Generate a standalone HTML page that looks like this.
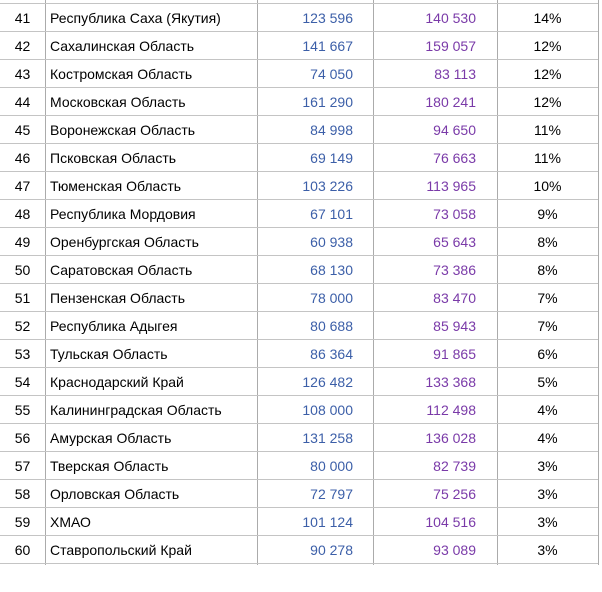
<!DOCTYPE html>
<html><head><meta charset="utf-8"><style>
body{margin:0;width:602px;height:565px;background:#fff;overflow:hidden;font-family:"Liberation Sans",sans-serif;font-size:14px;color:#000}
.r{position:absolute;left:0;width:598px;height:28px;border-top:1px solid #c4c4c4}
.r div{position:absolute;top:0;height:28px;line-height:28px;white-space:nowrap}
.a{left:0;width:45px;text-align:center}
.b{left:50px}
.c{right:245px;color:#3c5fa8}
.d{right:122px;color:#7a3aa8}
.e{left:497px;width:101px;text-align:center}
.v{position:absolute;top:0;width:1px;height:565px;background:#ababab}
</style></head><body>
<div class="v" style="left:45px"></div>
<div class="v" style="left:257px"></div>
<div class="v" style="left:373px"></div>
<div class="v" style="left:497px"></div>
<div class="v" style="left:598px"></div>
<div class="r" style="top:3px"><div class="a">41</div><div class="b">Республика Саха (Якутия)</div><div class="c">123 596</div><div class="d">140 530</div><div class="e">14%</div></div>
<div class="r" style="top:31px"><div class="a">42</div><div class="b">Сахалинская Область</div><div class="c">141 667</div><div class="d">159 057</div><div class="e">12%</div></div>
<div class="r" style="top:59px"><div class="a">43</div><div class="b">Костромская Область</div><div class="c">74 050</div><div class="d">83 113</div><div class="e">12%</div></div>
<div class="r" style="top:87px"><div class="a">44</div><div class="b">Московская Область</div><div class="c">161 290</div><div class="d">180 241</div><div class="e">12%</div></div>
<div class="r" style="top:115px"><div class="a">45</div><div class="b">Воронежская Область</div><div class="c">84 998</div><div class="d">94 650</div><div class="e">11%</div></div>
<div class="r" style="top:143px"><div class="a">46</div><div class="b">Псковская Область</div><div class="c">69 149</div><div class="d">76 663</div><div class="e">11%</div></div>
<div class="r" style="top:171px"><div class="a">47</div><div class="b">Тюменская Область</div><div class="c">103 226</div><div class="d">113 965</div><div class="e">10%</div></div>
<div class="r" style="top:199px"><div class="a">48</div><div class="b">Республика Мордовия</div><div class="c">67 101</div><div class="d">73 058</div><div class="e">9%</div></div>
<div class="r" style="top:227px"><div class="a">49</div><div class="b">Оренбургская Область</div><div class="c">60 938</div><div class="d">65 643</div><div class="e">8%</div></div>
<div class="r" style="top:255px"><div class="a">50</div><div class="b">Саратовская Область</div><div class="c">68 130</div><div class="d">73 386</div><div class="e">8%</div></div>
<div class="r" style="top:283px"><div class="a">51</div><div class="b">Пензенская Область</div><div class="c">78 000</div><div class="d">83 470</div><div class="e">7%</div></div>
<div class="r" style="top:311px"><div class="a">52</div><div class="b">Республика Адыгея</div><div class="c">80 688</div><div class="d">85 943</div><div class="e">7%</div></div>
<div class="r" style="top:339px"><div class="a">53</div><div class="b">Тульская Область</div><div class="c">86 364</div><div class="d">91 865</div><div class="e">6%</div></div>
<div class="r" style="top:367px"><div class="a">54</div><div class="b">Краснодарский Край</div><div class="c">126 482</div><div class="d">133 368</div><div class="e">5%</div></div>
<div class="r" style="top:395px"><div class="a">55</div><div class="b">Калининградская Область</div><div class="c">108 000</div><div class="d">112 498</div><div class="e">4%</div></div>
<div class="r" style="top:423px"><div class="a">56</div><div class="b">Амурская Область</div><div class="c">131 258</div><div class="d">136 028</div><div class="e">4%</div></div>
<div class="r" style="top:451px"><div class="a">57</div><div class="b">Тверская Область</div><div class="c">80 000</div><div class="d">82 739</div><div class="e">3%</div></div>
<div class="r" style="top:479px"><div class="a">58</div><div class="b">Орловская Область</div><div class="c">72 797</div><div class="d">75 256</div><div class="e">3%</div></div>
<div class="r" style="top:507px"><div class="a">59</div><div class="b">ХМАО</div><div class="c">101 124</div><div class="d">104 516</div><div class="e">3%</div></div>
<div class="r" style="top:535px"><div class="a">60</div><div class="b">Ставропольский Край</div><div class="c">90 278</div><div class="d">93 089</div><div class="e">3%</div></div>
<div class="r" style="top:563px"></div>
</body></html>
